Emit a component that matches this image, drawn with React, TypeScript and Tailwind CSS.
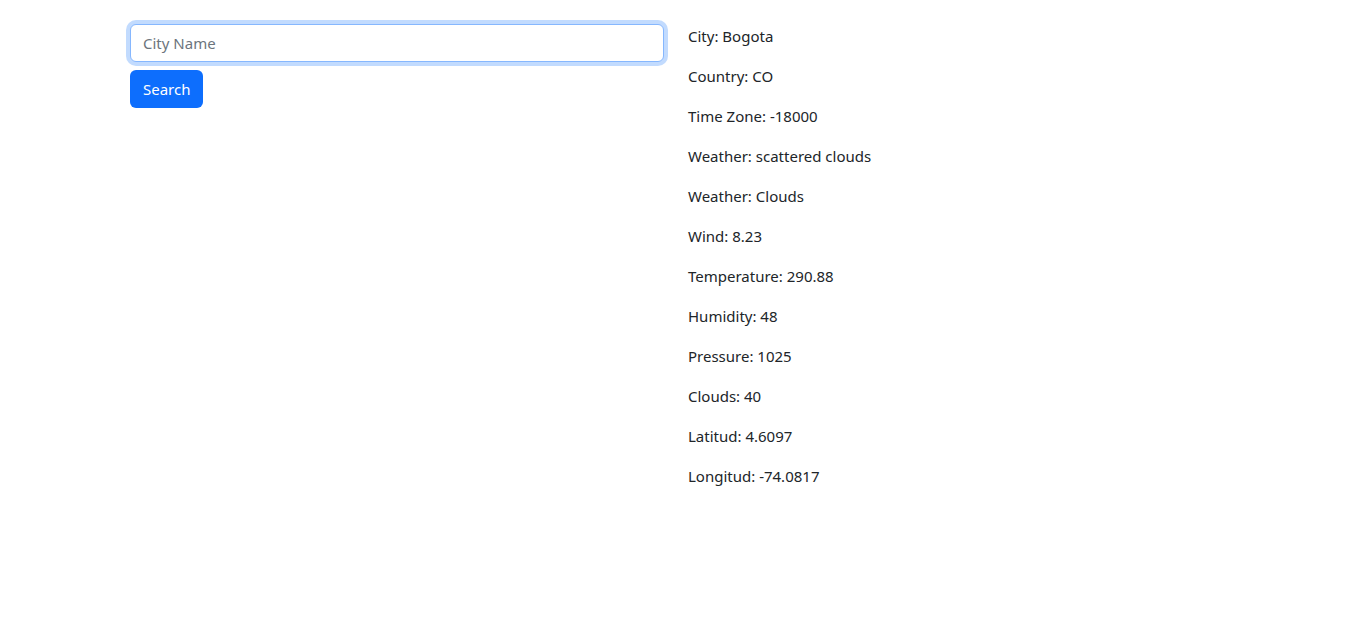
import React from "react";

const rows = [
  "City: Bogota",
  "Country: CO",
  "Time Zone: -18000",
  "Weather: scattered clouds",
  "Weather: Clouds",
  "Wind: 8.23",
  "Temperature: 290.88",
  "Humidity: 48",
  "Pressure: 1025",
  "Clouds: 40",
  "Latitud: 4.6097",
  "Longitud: -74.0817",
];

export default function App() {
  return (
    <div
      className="min-h-[639px] w-full bg-white text-[#212529]"
      style={{ fontFamily: '"Noto Sans", "Open Sans", sans-serif' }}
    >
      <div className="flex gap-[24px] pl-[130px]">
        <div className="w-[534px] pt-[24px]">
          <input
            type="text"
            placeholder="City Name"
            className="mb-2 block h-[38px] w-full rounded-[6px] border border-[#86b7fe] bg-white px-3 text-[15px] text-[#212529] shadow-[0_0_0_4px_rgba(13,110,253,0.25)] outline-none placeholder:text-[#6c757d]"
          />
          <button className="h-[38px] rounded-[6px] bg-[#0d6efd] px-[13px] text-[15px] text-white">
            Search
          </button>
        </div>
        <div className="pt-[24px]">
          {rows.map((r) => (
            <p key={r} className="mb-4 text-[15px] leading-6">
              {r}
            </p>
          ))}
        </div>
      </div>
    </div>
  );
}
